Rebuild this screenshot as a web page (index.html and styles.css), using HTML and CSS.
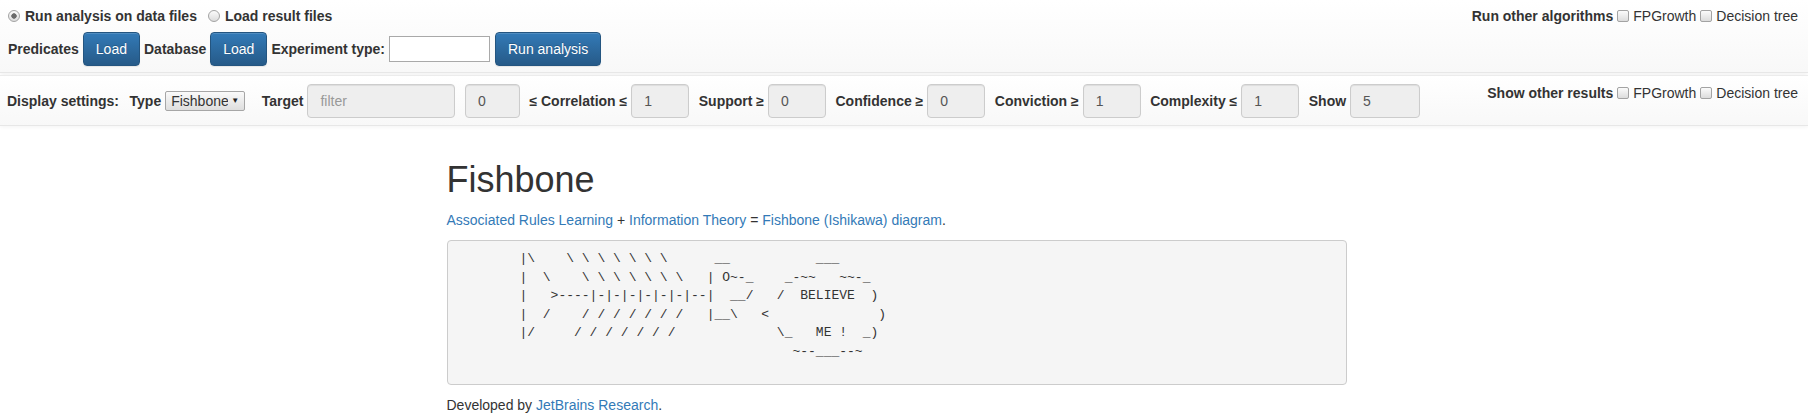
FILE: index.html
```html
<!DOCTYPE html>
<html lang="en">
<head>
<meta charset="utf-8">
<title>Fishbone</title>
<link rel="stylesheet" href="styles.css">
</head>
<body>
<header class="topbar">
  <div class="topbar-left">
    <div class="mode-row">
      <label class="mode"><input type="radio" class="radio" name="mode" checked>Run analysis on data files</label>
      <label class="mode"><input type="radio" class="radio" name="mode">Load result files</label>
    </div>
    <div class="load-row">
      <span class="lbl">Predicates</span>
      <button class="btn">Load</button>
      <span class="lbl">Database</span>
      <button class="btn">Load</button>
      <span class="lbl">Experiment type:</span>
      <input type="text" class="exp-input">
      <button class="btn">Run analysis</button>
    </div>
  </div>
  <div class="extras">
    <span class="lbl">Run other algorithms</span><input type="checkbox" class="check"><span>FPGrowth</span><input type="checkbox" class="check"><span>Decision tree</span>
  </div>
</header>

<nav class="settings">
  <div class="settings-left">
    <span class="lbl title">Display settings:</span>
    <div class="field type-field">
      <span class="lbl">Type</span>
      <span class="select-wrap"><select class="select"><option>Fishbone</option></select></span>
    </div>
    <div class="field">
      <span class="lbl">Target</span>
      <input type="text" class="ctl ctl-wide" placeholder="filter" readonly>
    </div>
    <input type="text" class="ctl ctl-min" value="0" readonly>
    <div class="field">
      <span class="lbl">≤ Correlation ≤</span>
      <input type="text" class="ctl" value="1" readonly>
    </div>
    <div class="field">
      <span class="lbl">Support ≥</span>
      <input type="text" class="ctl" value="0" readonly>
    </div>
    <div class="field">
      <span class="lbl">Confidence ≥</span>
      <input type="text" class="ctl" value="0" readonly>
    </div>
    <div class="field">
      <span class="lbl">Conviction ≥</span>
      <input type="text" class="ctl" value="1" readonly>
    </div>
    <div class="field">
      <span class="lbl">Complexity ≤</span>
      <input type="text" class="ctl" value="1" readonly>
    </div>
    <div class="field">
      <span class="lbl">Show</span>
      <input type="text" class="ctl ctl-show" value="5" readonly>
    </div>
  </div>
  <div class="extras extras-results">
    <span class="lbl">Show other results</span><input type="checkbox" class="check"><span>FPGrowth</span><input type="checkbox" class="check"><span>Decision tree</span>
  </div>
</nav>

<div class="page">
  <main class="content">
    <h1 class="heading">Fishbone</h1>
    <p class="intro"><a href="#">Associated Rules Learning</a> + <a href="#">Information Theory</a> = <a href="#">Fishbone (Ishikawa) diagram</a>.</p>
<pre class="art">        |\    \ \ \ \ \ \ \      __           ___
        |  \    \ \ \ \ \ \ \   | O~-_    _-~~   ~~-_
        |   &gt;----|-|-|-|-|-|-|--|  __/   /  BELIEVE  )
        |  /    / / / / / / /   |__\   &lt;              )
        |/     / / / / / / /             \_   ME !  _)
                                           ~--___--~</pre>
    <p class="footer">Developed by <a href="#">JetBrains Research</a>.</p>
  </main>
</div>
</body>
</html>
```

FILE: styles.css
```css
* {
  box-sizing: border-box;
}

body {
  margin: 0;
  font-family: "Liberation Sans", Arial, sans-serif;
  font-size: 14px;
  line-height: 20px;
  color: #333;
  background: #fff;
}

a {
  color: #337ab7;
  text-decoration: none;
}

.lbl {
  font-weight: bold;
  white-space: nowrap;
}

/* ---------- top bar ---------- */
.topbar {
  display: flex;
  justify-content: space-between;
  align-items: flex-start;
  padding: 6px 10px 6px 8px;
  height: 73px;
  background: linear-gradient(to bottom, #fff 0, #f8f8f8 100%);
  border-bottom: 1px solid #e7e7e7;
  box-shadow: 0 1px 4px rgba(0, 0, 0, 0.06);
}

.topbar-left {
  display: flex;
  flex-direction: column;
  gap: 6px;
}

.mode-row {
  display: flex;
  align-items: center;
  height: 20px;
}

.mode {
  display: flex;
  align-items: center;
  font-weight: bold;
  margin-right: 11px;
}

.radio {
  appearance: none;
  -webkit-appearance: none;
  width: 12px;
  height: 12px;
  margin: 0 5px 0 0;
  border-radius: 50%;
  border: 1px solid #a3a3a3;
  background: linear-gradient(to bottom, #fbfbfb, #dcdcdc);
}

.radio:checked {
  background: radial-gradient(circle, #6a6a6a 0, #6a6a6a 2.4px, transparent 3px), linear-gradient(to bottom, #fbfbfb, #dcdcdc);
}

.load-row {
  display: flex;
  align-items: center;
  gap: 4px;
  height: 34px;
}

.btn {
  height: 34px;
  padding: 6px 12px;
  font-family: inherit;
  font-size: 14px;
  line-height: 20px;
  color: #fff;
  background: linear-gradient(to bottom, #337ab7 0, #265a88 100%);
  border: 1px solid #245580;
  border-radius: 4px;
  text-shadow: 0 -1px 0 rgba(0, 0, 0, 0.2);
  box-shadow: inset 0 1px 0 rgba(255, 255, 255, 0.15), 0 1px 1px rgba(0, 0, 0, 0.075);
}

.exp-input {
  width: 101px;
  height: 26px;
  margin: 0 1px 0 0;
  border: 1px solid #a9a9a9;
  background: #fff;
  font-family: inherit;
  font-size: 14px;
}

.extras {
  display: flex;
  align-items: center;
  height: 20px;
}

.check {
  appearance: none;
  -webkit-appearance: none;
  width: 12px;
  height: 12px;
  margin: 0 4px 0 4px;
  border: 1px solid #a3a3a3;
  border-radius: 2px;
  background: linear-gradient(to bottom, #fbfbfb, #dcdcdc);
}

/* ---------- settings bar ---------- */
.settings {
  display: flex;
  justify-content: space-between;
  align-items: flex-start;
  margin-top: 2px;
  padding: 8px 10px 7px 7px;
  height: 51px;
  background: linear-gradient(to bottom, #fff 0, #f8f8f8 100%);
  border-top: 1px solid #ececec;
  border-bottom: 1px solid #e7e7e7;
  box-shadow: 0 1px 4px rgba(0, 0, 0, 0.05);
}

.settings-left {
  display: flex;
  align-items: center;
  gap: 9.5px;
  height: 34px;
}

.title {
  margin-right: 1px;
}

.field {
  display: flex;
  align-items: center;
  gap: 4px;
}

.type-field {
  margin-right: 7px;
}

.select-wrap {
  position: relative;
  display: inline-block;
}

.select-wrap::after {
  content: "▼";
  position: absolute;
  right: 6px;
  top: 4px;
  font-size: 8px;
  line-height: 12px;
  color: #222;
  pointer-events: none;
}

.select {
  appearance: none;
  -webkit-appearance: none;
  display: block;
  width: 80px;
  height: 20px;
  padding: 0 16px 0 5px;
  font-family: inherit;
  font-size: 14px;
  line-height: 18px;
  color: #333;
  border: 1px solid #a6a6a6;
  border-radius: 2px;
  background: linear-gradient(to bottom, #fafafa, #dedede);
}

.ctl {
  width: 58px;
  height: 34px;
  padding: 6px 12px;
  font-family: inherit;
  font-size: 14px;
  line-height: 20px;
  color: #555;
  background: #eee;
  border: 1px solid #ccc;
  border-radius: 4px;
  box-shadow: inset 0 1px 1px rgba(0, 0, 0, 0.075);
}

.ctl::placeholder {
  color: #999;
}

.ctl-wide {
  width: 148px;
}

.ctl-min {
  width: 55px;
}

.ctl-show {
  width: 70px;
}

.extras-results {
  margin-top: -1px;
}

/* ---------- content ---------- */
.page {
  padding-right: 15px;
}

.content {
  max-width: 900px;
  margin: 0 auto;
}

.heading {
  margin: 34px 0 10px;
  font-size: 36px;
  font-weight: 500;
  line-height: 1.1;
  color: #333;
}

.intro {
  margin: 0 0 10px;
}

.art {
  margin: 0 0 10px;
  padding: 9.5px 9.5px 23px;
  font-family: "Liberation Mono", "Courier New", monospace;
  font-size: 13px;
  line-height: 1.42857143;
  color: #333;
  background: #f5f5f5;
  border: 1px solid #ccc;
  border-radius: 4px;
  white-space: pre;
  overflow: hidden;
}

.footer {
  margin: 0;
}
```
